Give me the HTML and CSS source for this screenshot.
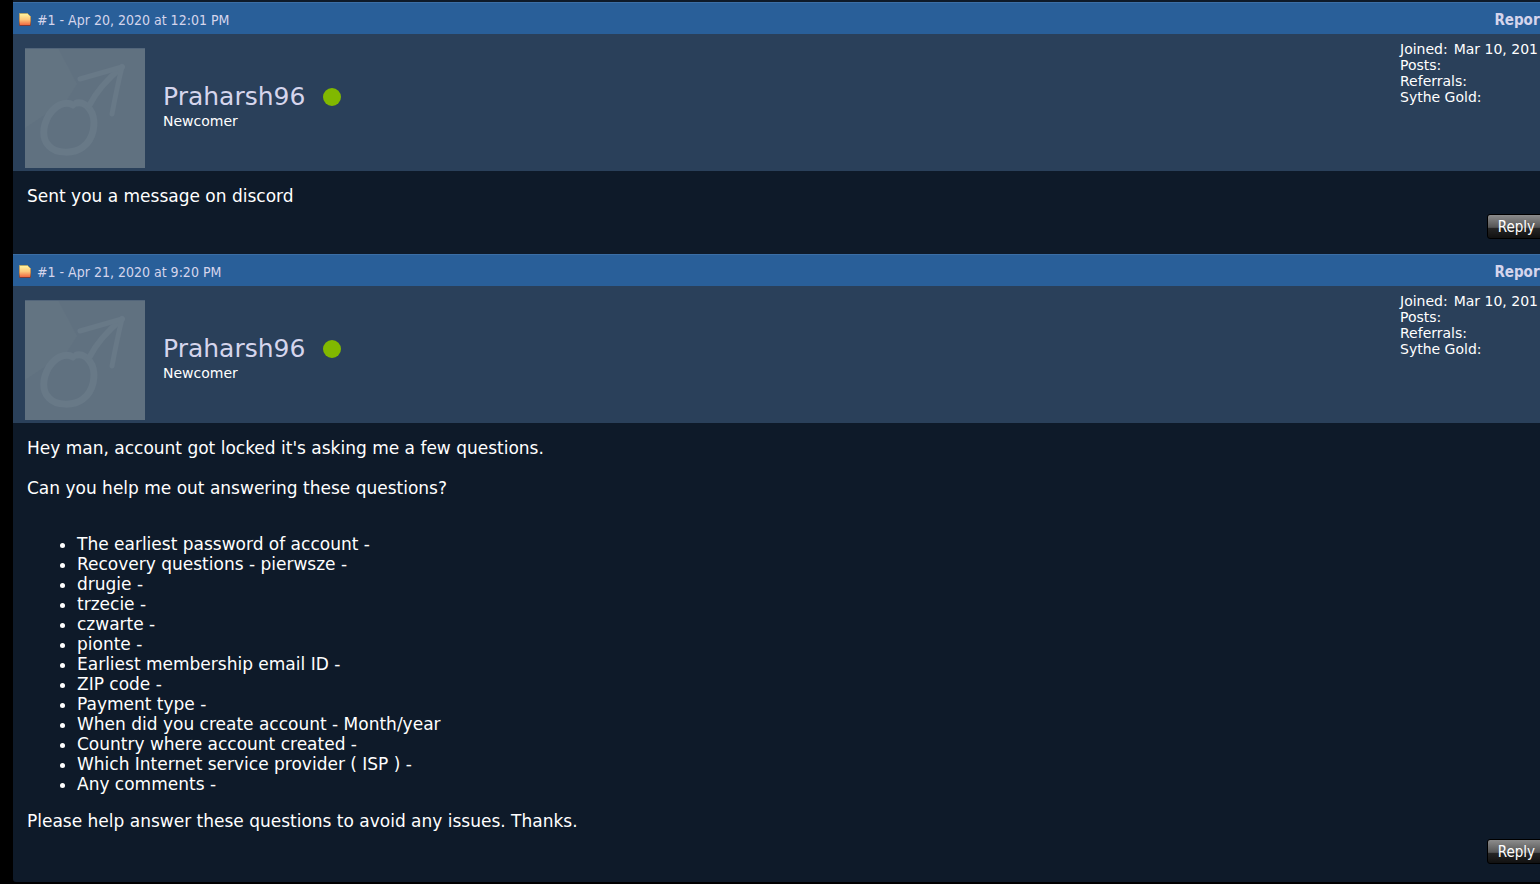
FILE: index.html
```html
<!DOCTYPE html>
<html lang="en">
<head>
<meta charset="utf-8">
<title>Conversation</title>
<link rel="stylesheet" href="styles.css">
</head>
<body>
<svg class="defs" aria-hidden="true">
  <defs>
    <linearGradient id="note-fill" x1="0" y1="0" x2="0" y2="1">
      <stop offset="0" stop-color="#fff6a0"/>
      <stop offset="0.5" stop-color="#fcc87c"/>
      <stop offset="1" stop-color="#f0603c"/>
    </linearGradient>
    <linearGradient id="note-edge" x1="0" y1="0" x2="0" y2="1">
      <stop offset="0" stop-color="#b5a96c"/>
      <stop offset="0.6" stop-color="#c98a4a"/>
      <stop offset="1" stop-color="#7b3a38"/>
    </linearGradient>
    <symbol id="note" viewBox="0 0 12 13">
      <path d="M0.5 0.5H8.5L11.5 3.5V12.5H0.5Z" fill="url(#note-fill)" stroke="url(#note-edge)"/>
    </symbol>
    <symbol id="male" viewBox="0 0 120 120">
      <path d="M0 0H120V120H0Z" fill="#607180"/>
      <path d="M0 0H33L52 36L42 52L0 80Z" fill="#637482"/>
      <path d="M0 0H120V1H0Z" fill="#52657a"/>
      <g fill="none" stroke="#687987" stroke-linecap="round" stroke-linejoin="round">
        <path d="M48 57C40 52 30 58 24 67C17 79 17 91 24 98C31 106 49 106 58 99C69 91 71 75 67 65C63 57 57 54 52 55" stroke-width="7"/>
        <path d="M64 58C71 44 81 32 97 19" stroke-width="6"/>
        <path d="M55 31L97 19C93 35 90 50 87 66" stroke-width="5"/>
      </g>
    </symbol>
  </defs>
</svg>
<main class="thread">
  <article class="post">
    <header class="post-head">
      <svg class="note" aria-hidden="true"><use href="#note"/></svg>
      <a class="date" href="#first">#1 - Apr 20, 2020 at 12:01 PM</a>
      <a class="report" href="#report">Report</a>
    </header>
    <section class="profile">
      <svg class="avatar" role="img" aria-label="Avatar"><use href="#male"/></svg>
      <div class="identity">
        <div class="name-row"><a class="name" href="#member">Praharsh96</a><span class="online"></span></div>
        <div class="rank">Newcomer</div>
      </div>
      <dl class="stats">
        <div><dt>Joined:</dt><dd>Mar 10, 201</dd></div>
        <div><dt>Posts:</dt></div>
        <div><dt>Referrals:</dt></div>
        <div><dt>Sythe Gold:</dt></div>
      </dl>
    </section>
    <div class="message">
      <p>Sent you a message on discord</p>
    </div>
    <footer class="actions"><button class="reply" type="button">Reply</button></footer>
  </article>

  <article class="post">
    <header class="post-head">
      <svg class="note" aria-hidden="true"><use href="#note"/></svg>
      <a class="date" href="#second">#1 - Apr 21, 2020 at 9:20 PM</a>
      <a class="report" href="#report">Report</a>
    </header>
    <section class="profile">
      <svg class="avatar" role="img" aria-label="Avatar"><use href="#male"/></svg>
      <div class="identity">
        <div class="name-row"><a class="name" href="#member">Praharsh96</a><span class="online"></span></div>
        <div class="rank">Newcomer</div>
      </div>
      <dl class="stats">
        <div><dt>Joined:</dt><dd>Mar 10, 201</dd></div>
        <div><dt>Posts:</dt></div>
        <div><dt>Referrals:</dt></div>
        <div><dt>Sythe Gold:</dt></div>
      </dl>
    </section>
    <div class="message">
      <p>Hey man, account got locked it's asking me a few questions.</p>
      <p>Can you help me out answering these questions?</p>
      <ul>
        <li>The earliest password of account -</li>
        <li>Recovery questions - pierwsze -</li>
        <li>drugie -</li>
        <li>trzecie -</li>
        <li>czwarte -</li>
        <li>pionte -</li>
        <li>Earliest membership email ID -</li>
        <li>ZIP code -</li>
        <li>Payment type -</li>
        <li>When did you create account - Month/year</li>
        <li>Country where account created -</li>
        <li>Which Internet service provider ( ISP ) -</li>
        <li>Any comments -</li>
      </ul>
      <p>Please help answer these questions to avoid any issues. Thanks.</p>
    </div>
    <footer class="actions"><button class="reply" type="button">Reply</button></footer>
  </article>
</main>
</body>
</html>
```

FILE: styles.css
```css
* { box-sizing: border-box; }

body {
  margin: 0;
  background: #000;
  color: #fff;
  font-family: Verdana, "DejaVu Sans", sans-serif;
  font-size: 17px;
  line-height: 20px;
  overflow-x: hidden;
}

a { color: #d5d5ec; text-decoration: none; }

.defs { display: block; width: 0; height: 0; }

/* The thread runs on past the right edge of the window. */
.thread {
  margin: 0 -20px 0 13px;
  padding-top: 2px;
  background: #0e1a29;
  border-bottom-left-radius: 3px;
}

.post-head {
  display: flex;
  align-items: center;
  height: 32px;
  padding: 2px 14px 0 6px;
  background: #295f99;
  border-top: 1px solid #3b6ea5;
  font-family: Tahoma, "DejaVu Sans Condensed", "DejaVu Sans", sans-serif;
  font-size: 14px;
}

.note { width: 12px; height: 13px; margin-right: 6px; }
.report { margin-left: auto; font-weight: bold; font-size: 15px; }

.profile {
  display: flex;
  padding: 14px 12px 3px;
  background: #2a405a;
}

.avatar { width: 120px; height: 120px; }

.identity { margin: 33px 0 0 18px; }
.name-row { display: flex; align-items: center; gap: 18px; height: 32px; }
.name { font-size: 25px; line-height: 32px; }
.online { width: 18px; height: 18px; border-radius: 50%; background: #81b800; }
.rank, .stats { font-size: 14px; line-height: 16px; }

.stats { width: 148px; margin: -7px 0 0 auto; white-space: nowrap; }
.stats div { display: flex; gap: 6px; }
.stats dd { margin: 0; }

.message { padding: 15px 14px 0; }
.message p { margin: 0 0 20px; }
.message p:last-child { margin-bottom: 0; }
.message ul { margin: 36px 0 17px; padding-left: 50px; }

.actions {
  display: flex;
  justify-content: flex-end;
  padding: 8px 14px 15px 0;
}

.post:last-child .actions { padding-bottom: 18px; }

.reply {
  height: 25px;
  padding: 0 10px;
  border: 1px solid #000;
  border-radius: 3px;
  background: linear-gradient(#8c8c8c, #555 54%, #262626 56%, #111);
  color: #fff;
  font-family: Tahoma, "DejaVu Sans Condensed", "DejaVu Sans", sans-serif;
  font-size: 15px;
  line-height: 22px;
}
```
